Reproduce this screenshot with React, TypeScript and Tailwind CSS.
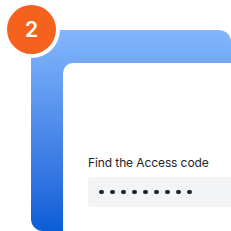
import React from "react";

export default function App() {
  const dots = Array.from({ length: 9 });
  return (
    <div
      className="relative w-[231px] h-[231px] bg-white overflow-hidden"
      style={{ fontFamily: "Inter, 'Noto Sans', sans-serif" }}
    >
      <div className="ml-[31px] mt-[30px] w-[200px] h-[201px] rounded-[12px] bg-gradient-to-b from-[#84b6fc] to-[#0a5cd6] pl-[32px] pt-[33px] flex">
        <div className="flex-1 bg-white rounded-tl-[10px] pl-[25px] pt-[92px] flex flex-col">
          <div className="text-[12px] leading-[16px] tracking-[-0.1px] text-[#1f2329]">Find the Access code</div>
          <div className="mt-[6px] h-[30px] bg-[#f3f4f6] rounded-l-[2px] flex items-center pl-[11px] gap-[6.5px]">
            {dots.map((_, i) => (
              <div key={i} className="w-[4.5px] h-[4.5px] rounded-full bg-[#1f2329]" />
            ))}
          </div>
        </div>
      </div>
      <div className="absolute left-[3px] top-[1px] w-[57px] h-[57px] rounded-full bg-white p-[4px]">
        <div className="w-full h-full rounded-full bg-[#f5621e] flex items-center justify-center text-white text-[21px] font-semibold">
          2
        </div>
      </div>
    </div>
  );
}
